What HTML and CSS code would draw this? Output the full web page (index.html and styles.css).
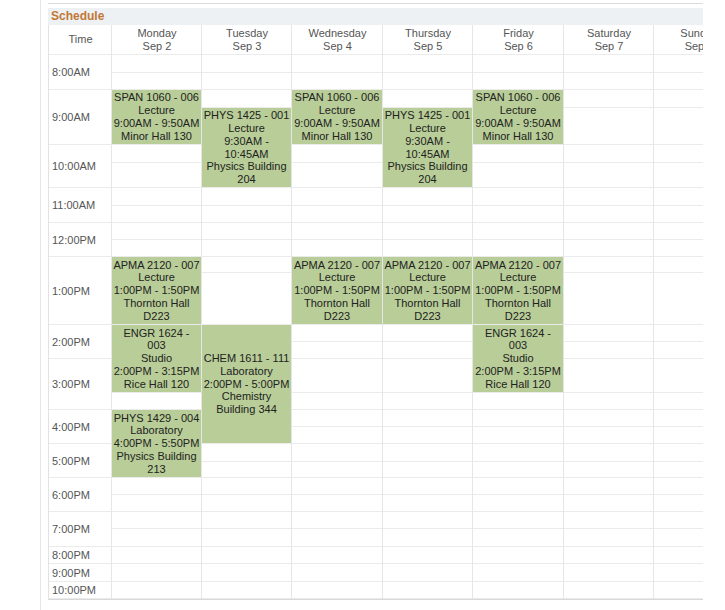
FILE: index.html
```html
<!DOCTYPE html>
<html lang="en">
<head>
<meta charset="utf-8">
<title>Schedule</title>
<link rel="stylesheet" href="styles.css">
</head>
<body>
<div class="page">
  <div class="panel">
    <div class="topline"></div>
    <div class="bar">Schedule</div>
    <div class="sched">
      <div class="hlines">
        <div></div><div></div><div></div><div></div><div></div><div></div><div></div>
        <div></div><div></div><div></div><div></div><div></div><div></div><div></div>
        <div></div><div></div><div></div><div></div><div></div><div></div><div></div>
        <div></div><div></div><div></div><div></div><div></div><div></div><div></div>
      </div>
      <div class="vlines">
        <div></div><div></div><div></div><div></div><div></div><div></div><div></div><div></div>
      </div>
      <div class="cells">
        <div class="hd">Time</div>
        <div class="hd">Monday<br>Sep 2</div>
        <div class="hd">Tuesday<br>Sep 3</div>
        <div class="hd">Wednesday<br>Sep 4</div>
        <div class="hd">Thursday<br>Sep 5</div>
        <div class="hd">Friday<br>Sep 6</div>
        <div class="hd">Saturday<br>Sep 7</div>
        <div class="hd">Sunday<br>Sep 8</div>

        <div class="time">8:00AM</div>
        <div class="time">9:00AM</div>
        <div class="time">10:00AM</div>
        <div class="time">11:00AM</div>
        <div class="time">12:00PM</div>
        <div class="time">1:00PM</div>
        <div class="time">2:00PM</div>
        <div class="time">3:00PM</div>
        <div class="time">4:00PM</div>
        <div class="time">5:00PM</div>
        <div class="time">6:00PM</div>
        <div class="time">7:00PM</div>
        <div class="time one">8:00PM</div>
        <div class="time one">9:00PM</div>
        <div class="time one">10:00PM</div>

        <div class="ev mon at-0900"><p>SPAN 1060 - 006<br>Lecture<br>9:00AM - 9:50AM<br>Minor Hall 130</p></div>
        <div class="ev wed at-0900"><p>SPAN 1060 - 006<br>Lecture<br>9:00AM - 9:50AM<br>Minor Hall 130</p></div>
        <div class="ev fri at-0900"><p>SPAN 1060 - 006<br>Lecture<br>9:00AM - 9:50AM<br>Minor Hall 130</p></div>

        <div class="ev tue at-0930"><p>PHYS 1425 - 001<br>Lecture<br>9:30AM - 10:45AM<br>Physics Building 204</p></div>
        <div class="ev thu at-0930"><p>PHYS 1425 - 001<br>Lecture<br>9:30AM - 10:45AM<br>Physics Building 204</p></div>

        <div class="ev mon at-1300"><p>APMA 2120 - 007<br>Lecture<br>1:00PM - 1:50PM<br>Thornton Hall D223</p></div>
        <div class="ev wed at-1300"><p>APMA 2120 - 007<br>Lecture<br>1:00PM - 1:50PM<br>Thornton Hall D223</p></div>
        <div class="ev thu at-1300"><p>APMA 2120 - 007<br>Lecture<br>1:00PM - 1:50PM<br>Thornton Hall D223</p></div>
        <div class="ev fri at-1300"><p>APMA 2120 - 007<br>Lecture<br>1:00PM - 1:50PM<br>Thornton Hall D223</p></div>

        <div class="ev mon at-1400-short"><p>ENGR 1624 -<br>003<br>Studio<br>2:00PM - 3:15PM<br>Rice Hall 120</p></div>
        <div class="ev fri at-1400-short"><p>ENGR 1624 -<br>003<br>Studio<br>2:00PM - 3:15PM<br>Rice Hall 120</p></div>

        <div class="ev tue at-1400-long"><p>CHEM 1611 - 111<br>Laboratory<br>2:00PM - 5:00PM<br>Chemistry Building 344</p></div>

        <div class="ev mon at-1600"><p>PHYS 1429 - 004<br>Laboratory<br>4:00PM - 5:50PM<br>Physics Building 213</p></div>
      </div>
    </div>
  </div>
</div>
</body>
</html>
```

FILE: styles.css
```css
* {
  box-sizing: border-box;
}

html,
body {
  margin: 0;
  background: #fff;
}

body {
  font-family: "Liberation Sans", Arial, sans-serif;
  font-size: 11px;
  color: #222;
}

.page {
  margin-left: 40px;
  border-left: 1px solid #e6e6e6;
  min-height: 610px;
  padding-left: 7px;
}

.panel {
  width: 655px;
  overflow: hidden;
  padding-top: 3px;
}

.topline {
  height: 1px;
  background: #dcdcdc;
}

.bar {
  margin-top: 4px;
  height: 17px;
  background: #eef1f3;
  padding-left: 3px;
  font-weight: bold;
  font-size: 12px;
  line-height: 17px;
  color: #c27736;
}

.sched {
  display: grid;
  width: 696px;
  border-left: 1px solid #e2e2e2;
  border-bottom: 1px solid #d8d8d8;
}

.hlines,
.vlines,
.cells {
  grid-area: 1 / 1;
  display: grid;
}

.hlines,
.cells {
  grid-template-rows:
    30px
    17.5px 17.5px
    18px 37px
    18px 25px
    18px 17px
    17px 17px
    16px 52px
    17px 17px
    34px 17px
    17px 17px
    18px 16px
    17px 17px
    17px 18px
    17px 18px 17px;
}

.vlines,
.cells {
  grid-template-columns: 63px 90px 90px 91px 90px 91px 90px 90px;
}

.hlines > div {
  border-bottom: 1px solid #ebebeb;
}

.vlines > div {
  border-right: 1px solid #e6e6e6;
}

.hd {
  display: flex;
  align-items: center;
  justify-content: center;
  text-align: center;
  line-height: 13px;
  color: #555;
  padding-bottom: 1px;
}

.time {
  grid-column: 1;
  grid-row: span 2;
  display: flex;
  align-items: center;
  padding-left: 3px;
  background: #fff;
  border-bottom: 1px solid #ebebeb;
  border-right: 1px solid #e6e6e6;
  color: #555;
}

.time.one {
  grid-row: span 1;
}

.ev {
  display: flex;
  align-items: center;
  justify-content: center;
  margin: 0 1px 1px 0;
  padding: 0 1.25px;
  background: #b8cd97;
  text-align: center;
  line-height: 12.8px;
  color: #222;
}

.ev p {
  margin: 0;
}

.mon { grid-column: 2; }
.tue { grid-column: 3; }
.wed { grid-column: 4; }
.thu { grid-column: 5; }
.fri { grid-column: 6; }

.at-0900 { grid-row: 4 / span 2; }
.at-0930 { grid-row: 5 / span 3; }
.at-1300 { grid-row: 12 / span 2; }
.at-1400-short { grid-row: 14 / span 3; }
.at-1400-long { grid-row: 14 / span 6; }
.at-1600 { grid-row: 18 / span 4; }
```
